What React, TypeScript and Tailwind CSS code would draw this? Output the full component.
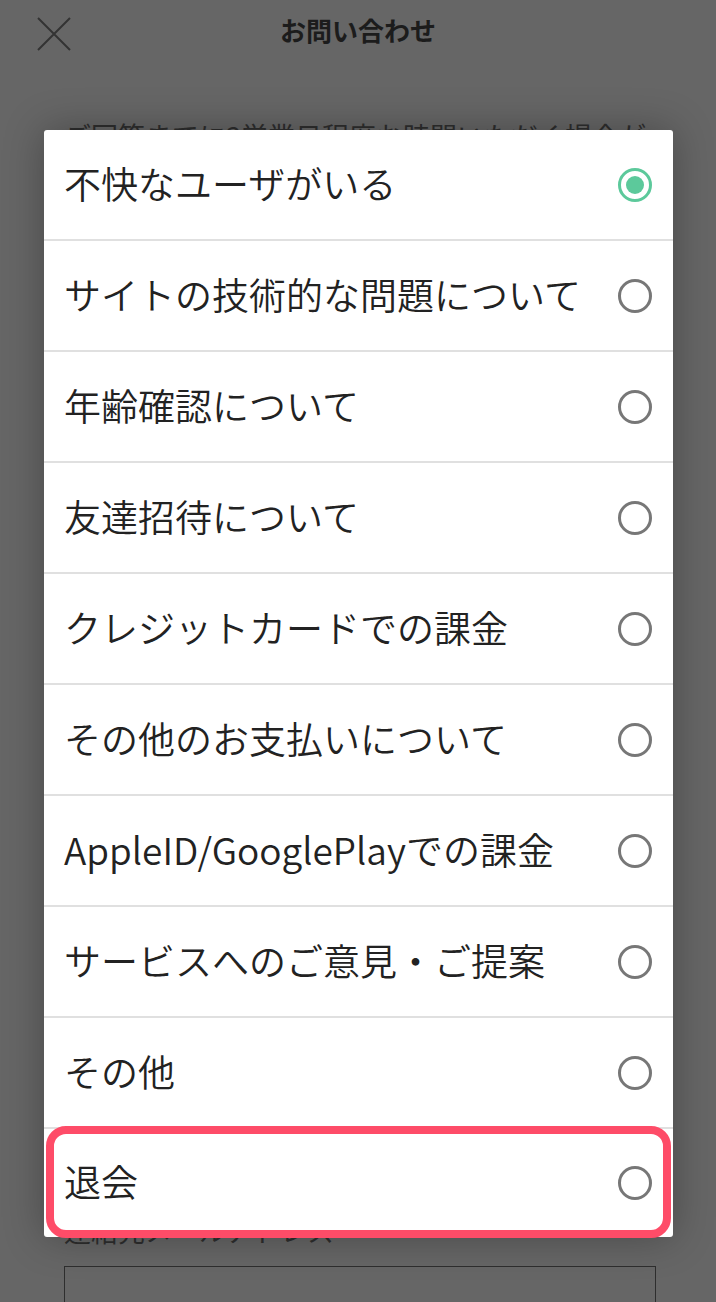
import React from "react";

const options = [
  "不快なユーザがいる",
  "サイトの技術的な問題について",
  "年齢確認について",
  "友達招待について",
  "クレジットカードでの課金",
  "その他のお支払いについて",
  "AppleID/GooglePlayでの課金",
  "サービスへのご意見・ご提案",
  "その他",
  "退会",
];

function Radio({ checked }: { checked: boolean }) {
  return (
    <svg width="36" height="36" viewBox="0 0 36 36" className="shrink-0">
      <circle
        cx="18"
        cy="18"
        r="15.5"
        fill="none"
        stroke={checked ? "#5cc99b" : "#777777"}
        strokeWidth="3"
      />
      {checked && <circle cx="18" cy="18" r="9" fill="#5cc99b" />}
    </svg>
  );
}

export default function App() {
  return (
    <div
      className="relative w-[716px] h-[1302px] overflow-hidden bg-[#666666]"
      style={{ fontFamily: '"Noto Sans CJK JP", "Noto Sans", sans-serif' }}
    >
      {/* background page (dimmed) */}
      <div className="flex flex-col">
        <div className="relative h-[68px] flex items-center justify-center">
          <svg
            className="absolute left-[37px] top-[17px]"
            width="34"
            height="34"
            viewBox="0 0 34 34"
          >
            <path d="M1 1 L33 33 M33 1 L1 33" stroke="#333333" strokeWidth="2" />
          </svg>
          <div className="text-[26px] font-bold text-[#1c1c1c] leading-none mt-[-8px]">
            お問い合わせ
          </div>
        </div>
        <div className="pl-[64px] pr-[60px] mt-[46px] text-[27px] leading-[44px] text-[#2e2e2e] h-[1097px] overflow-hidden">
          ご回答までに3営業日程度お時間いただく場合がございます。あらかじめご了承ください。
        </div>
        <div className="pl-[64px] text-[27px] leading-[40px] text-[#2e2e2e]">
          連絡先メールアドレス
        </div>
        <div className="ml-[64px] mt-[15px] w-[592px] h-[100px] border border-[#2e2e2e]" />
      </div>

      {/* modal */}
      <div className="absolute left-[44px] top-[130px] w-[629px] bg-white rounded-[3px] shadow-[0_0_40px_rgba(0,0,0,0.3)]">
        <div className="flex flex-col">
          {options.map((o, i) => {
            const last = i === options.length - 1;
            return (
              <div
                key={o}
                className={
                  last
                    ? "h-[108px] flex items-center justify-between pl-[20px] pr-[20px]"
                    : "h-[111px] flex items-center justify-between pl-[20px] pr-[20px] border-b-2 border-[#e0e0e0]"
                }
              >
                <span className="text-[37px] font-[350] leading-none text-[#222222] whitespace-nowrap mt-[-3px]">
                  {o}
                </span>
                <Radio checked={i === 0} />
              </div>
            );
          })}
        </div>
        <div className="absolute left-[2px] right-[2px] top-[996px] h-[112px] border-[8px] border-[#fe4c68] rounded-[20px]" />
      </div>
    </div>
  );
}
